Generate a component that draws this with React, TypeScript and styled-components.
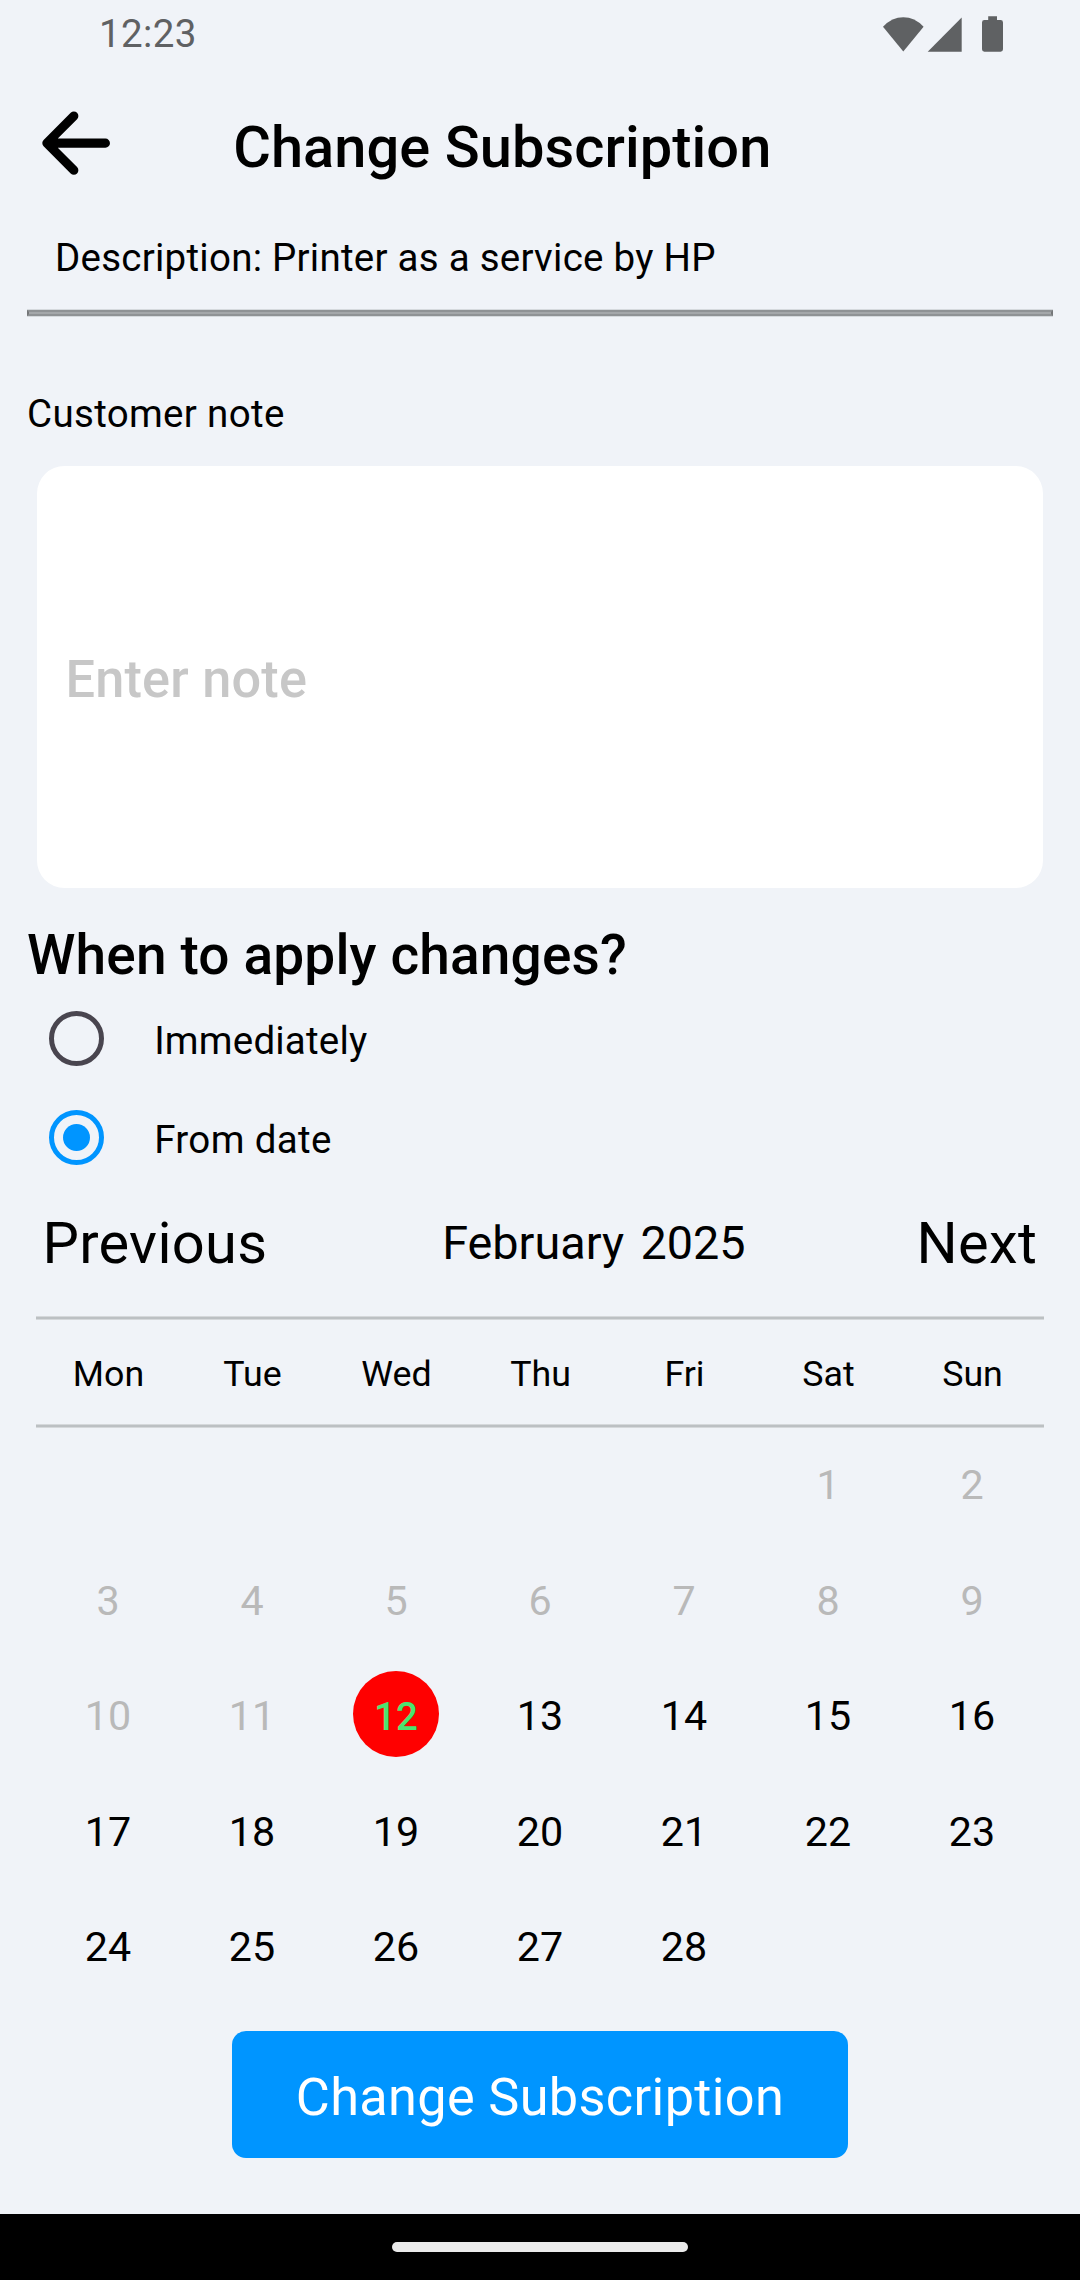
import React, { useState } from "react";
import styled, { createGlobalStyle } from "styled-components";

const GlobalStyle = createGlobalStyle`
  * { box-sizing: border-box; }
  body {
    margin: 0;
    background: #f0f3f8;
    font-family: Roboto, "Noto Sans", sans-serif;
    color: #000;
  }
  button, textarea { font-family: inherit; }
`;

const Screen = styled.div`
  width: 1080px;
  height: 2280px;
  display: flex;
  flex-direction: column;
  background: #f0f3f8;
  overflow: hidden;
`;

const StatusBar = styled.header`
  height: 95px;
  padding: 11px 77px 0 99px;
  display: flex;
  justify-content: space-between;
  align-items: flex-start;
  color: #5f6163;
`;

const Clock = styled.span`
  font-size: 38.5px;
  line-height: 45px;
  letter-spacing: 0.4px;
`;

const StatusIcons = styled.svg`
  width: 121px;
  height: 37px;
  margin-top: 5px;
  fill: #5f6163;
`;

const TitleBar = styled.div`
  height: 140px;
  padding-left: 28px;
  display: flex;
  align-items: flex-start;
`;

const BackButton = styled.button`
  width: 96.25px;
  height: 96.25px;
  padding: 0;
  border: 0;
  background: none;
  svg {
    display: block;
    width: 100%;
    height: 100%;
  }
`;

const Title = styled.h1`
  margin: 18px 0 0 108.9px;
  font-size: 57.75px;
  line-height: 68px;
  font-weight: 500;
  letter-spacing: 0.07px;
`;

const Description = styled.p`
  margin: 0 0 30px 55px;
  font-size: 38.5px;
  line-height: 45px;
  letter-spacing: 0.25px;
`;

const Rule = styled.div`
  height: 6px;
  margin: 0 27px;
  border: solid #8f9295;
  border-width: 2px;
  border-left-color: #747678;
  border-right-color: #747678;
  background: #a4a7aa;
  box-shadow: 0 -1px #d5d9dd, 0 1px #d5d9dd;
`;

const NoteLabel = styled.label`
  margin: 75px 0 30px 27px;
  font-size: 38.5px;
  line-height: 45px;
  letter-spacing: 0.33px;
`;

const NoteField = styled.textarea`
  display: block;
  height: 422px;
  margin: 0 37px;
  padding: 183px 28.5px 0;
  border: 0;
  border-radius: 27.5px;
  background: #fff;
  font-size: 52.25px;
  line-height: 61px;
  font-weight: 500;
  letter-spacing: 0.2px;
  resize: none;
  outline: 0;
  overflow: hidden;
  &::placeholder {
    color: #c7c7c7;
    opacity: 1;
  }
`;

const SectionHeading = styled.h2`
  margin: 35px 0 0 27px;
  font-size: 55px;
  line-height: 64px;
  font-weight: 500;
  letter-spacing: 0.15px;
`;

const RadioGroup = styled.div`
  margin-top: 2px;
  padding-left: 49px;
`;

const RadioRow = styled.div`
  height: 99px;
  display: flex;
  align-items: center;
  gap: 50.2px;
  cursor: pointer;
`;

const RadioMark = styled.span<{ $on: boolean }>`
  width: 55px;
  height: 55px;
  display: flex;
  align-items: center;
  justify-content: center;
  border-radius: 50%;
  border: 5.5px solid ${(p) => (p.$on ? "#0095ff" : "#49454f")};
  &::after {
    content: "";
    width: 27.5px;
    height: 27.5px;
    border-radius: 50%;
    background: ${(p) => (p.$on ? "#0095ff" : "transparent")};
  }
`;

const RadioText = styled.span<{ $spacing: number }>`
  padding-top: 4px;
  font-size: 38.5px;
  line-height: 45px;
  letter-spacing: ${(p) => p.$spacing}px;
`;

const CalendarHeader = styled.div`
  height: 129px;
  padding: 22px 42.8px 0 42.4px;
  display: flex;
  justify-content: space-between;
  align-items: flex-start;
`;

const MonthNav = styled.button`
  padding: 0;
  border: 0;
  background: none;
  color: #000;
  font-size: 57.75px;
  line-height: 68px;
  letter-spacing: 0.33px;
`;

const MonthTitle = styled.div`
  margin: 7px 0 0 4px;
  display: flex;
  gap: 16.5px;
  font-size: 46.75px;
  line-height: 54px;
`;

const Divider = styled.div`
  height: 4px;
  margin: 0 36px;
  background: linear-gradient(
    #d5d8db 0 1px,
    #bcc0c3 1px 3px,
    #d5d8db 3px 4px
  );
`;

const Weekdays = styled.div`
  height: 104px;
  margin: 0 35.5px 0 36.5px;
  padding-top: 33px;
  display: grid;
  grid-template-columns: repeat(7, 1fr);
  justify-items: center;
  font-size: 35.75px;
  line-height: 42px;
`;

const Days = styled.div`
  height: 603px;
  margin: 0 36px;
  display: grid;
  grid-template-columns: repeat(7, 1fr);
  grid-auto-rows: 115.5px;
  justify-items: center;
`;

const Day = styled.span<{ $past: boolean }>`
  padding-top: 33.25px;
  font-size: 41.25px;
  line-height: 48px;
  color: ${(p) => (p.$past ? "#b9b9b9" : "#000")};
`;

const SelectedDay = styled.span`
  width: 86px;
  height: 86px;
  margin-top: 12px;
  padding-top: 23px;
  border-radius: 50%;
  background: #f00;
  color: #4be370;
  text-align: center;
  font-size: 38.5px;
  line-height: 45px;
  font-weight: 500;
`;

const SubmitButton = styled.button`
  align-self: center;
  width: 616px;
  height: 127px;
  padding: 6px 0 0;
  border: 0;
  border-radius: 14px;
  background: #0095ff;
  color: #fff;
  font-size: 52.25px;
  line-height: 61px;
  letter-spacing: 0.35px;
`;

const NavigationBar = styled.footer`
  height: 66px;
  margin-top: auto;
  padding-top: 28px;
  background: #000;
`;

const HomeHandle = styled.div`
  width: 296px;
  height: 10px;
  margin: 0 auto;
  border-radius: 5px;
  background: #ebebeb;
`;

const WEEKDAYS = ["Mon", "Tue", "Wed", "Thu", "Fri", "Sat", "Sun"];
const LEADING_BLANKS = 5;
const DAYS_IN_MONTH = 28;
const TODAY = 12;

const OPTIONS = [
  { id: "now", label: "Immediately", spacing: 0.2 },
  { id: "date", label: "From date", spacing: 0.35 },
];

export default function App() {
  const [when, setWhen] = useState("date");
  const days = Array.from({ length: DAYS_IN_MONTH }, (_, i) => i + 1);

  return (
    <>
      <GlobalStyle />
      <Screen>
        <StatusBar>
          <Clock>12:23</Clock>
          <StatusIcons viewBox="0 0 121 37">
            <path d="M1 10.7Q10 1.3 21.3 1.3T41.6 10.7L21.3 35.5Z" />
            <path d="M79.7 1.5V35.7H45.7Z" />
            <path d="M106.2 0.3H115V4H118.6Q121 4 121 6.4V33.3Q121 35.7 118.6 35.7H102.4Q100 35.7 100 33.3V6.4Q100 4 102.4 4H106.2Z" />
          </StatusIcons>
        </StatusBar>

        <TitleBar>
          <BackButton aria-label="Back">
            <svg viewBox="0 0 512 512">
              <path
                d="M244 400 100 256l144-144M120 256h292"
                fill="none"
                stroke="#000"
                strokeWidth="48"
                strokeLinecap="round"
                strokeLinejoin="round"
              />
            </svg>
          </BackButton>
          <Title>Change Subscription</Title>
        </TitleBar>

        <Description>Description: Printer as a service by HP</Description>
        <Rule />

        <NoteLabel htmlFor="note">Customer note</NoteLabel>
        <NoteField id="note" placeholder="Enter note" />

        <SectionHeading>When to apply changes?</SectionHeading>
        <RadioGroup role="radiogroup">
          {OPTIONS.map((o) => (
            <RadioRow
              key={o.id}
              role="radio"
              aria-checked={when === o.id}
              onClick={() => setWhen(o.id)}
            >
              <RadioMark $on={when === o.id} />
              <RadioText $spacing={o.spacing}>{o.label}</RadioText>
            </RadioRow>
          ))}
        </RadioGroup>

        <CalendarHeader>
          <MonthNav>Previous</MonthNav>
          <MonthTitle>
            <span>February</span>
            <span>2025</span>
          </MonthTitle>
          <MonthNav>Next</MonthNav>
        </CalendarHeader>
        <Divider />
        <Weekdays>
          {WEEKDAYS.map((d) => (
            <span key={d}>{d}</span>
          ))}
        </Weekdays>
        <Divider />
        <Days>
          {Array.from({ length: LEADING_BLANKS }, (_, i) => (
            <span key={`blank-${i}`} />
          ))}
          {days.map((d) =>
            d === TODAY ? (
              <SelectedDay key={d}>{d}</SelectedDay>
            ) : (
              <Day key={d} $past={d < TODAY}>
                {d}
              </Day>
            )
          )}
        </Days>

        <SubmitButton>Change Subscription</SubmitButton>

        <NavigationBar>
          <HomeHandle />
        </NavigationBar>
      </Screen>
    </>
  );
}
